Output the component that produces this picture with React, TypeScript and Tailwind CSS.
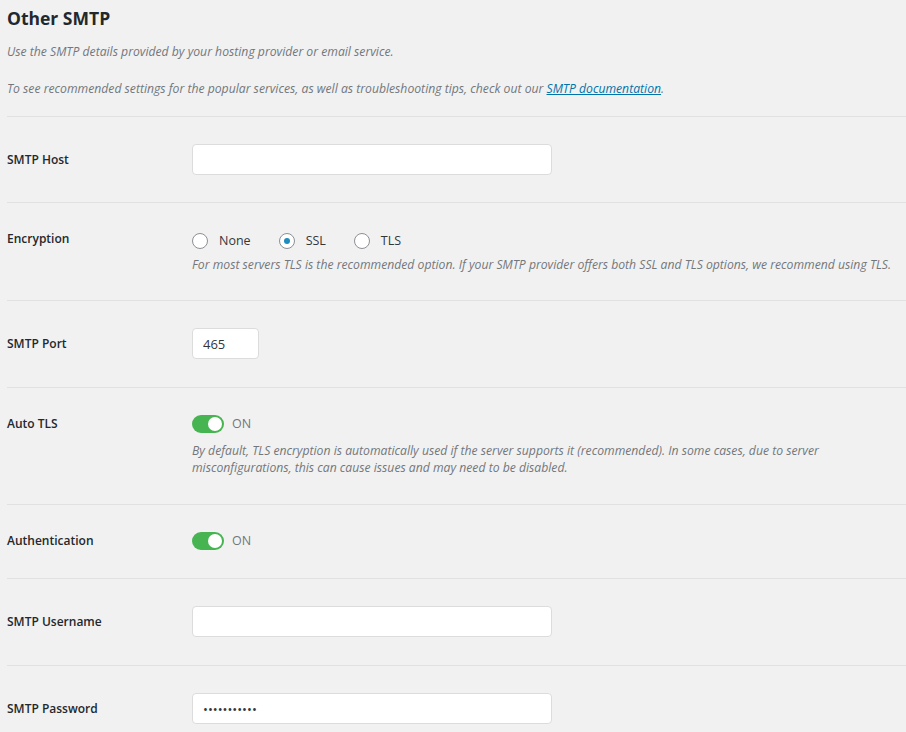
import type { ReactNode } from "react";

const font = { fontFamily: '"Open Sans", "Noto Sans", sans-serif' };

const Row = ({
  label,
  tall,
  loose,
  children,
}: {
  label: string;
  tall?: boolean;
  loose?: boolean;
  children: ReactNode;
}) => (
  <div className={`flex items-start border-b border-[#e1e1e1] pt-[27px] ${loose ? "pb-[28px]" : "pb-[27px]"}`}>
    <div
      className={`w-[185px] shrink-0 flex items-center text-[12px] font-semibold text-[#23282d] ${
        tall ? "h-[31px]" : "h-[18px]"
      }`}
    >
      {label}
    </div>
    <div className="flex-1 min-w-0">{children}</div>
  </div>
);

const TextInput = ({ w, value, password }: { w: string; value?: string; password?: boolean }) => (
  <input
    type={password ? "password" : "text"}
    defaultValue={value}
    readOnly
    className={`${w} h-[31px] block rounded-[4px] border border-[#dcdcdc] bg-white px-[10px] text-[13px] text-[#32373c] outline-none`}
  />
);

const Desc = ({ children, className = "" }: { children: ReactNode; className?: string }) => (
  <p className={`text-[12.2px] italic leading-[17px] text-[#72777c] ${className}`}>{children}</p>
);

const Radio = ({ label, checked }: { label: string; checked?: boolean }) => (
  <label className="flex items-center gap-[11px] text-[12.5px] text-[#32373c]">
    <span className="flex h-[16px] w-[16px] items-center justify-center rounded-full border border-[#8c8f94] bg-white">
      {checked && <span className="h-[6px] w-[6px] rounded-full bg-[#1e8cbe]" />}
    </span>
    {label}
  </label>
);

const Toggle = () => (
  <div className="flex h-[18px] items-center gap-[8px]">
    <span className="flex h-[18px] w-[32px] items-center justify-end rounded-full bg-[#46b450] pr-[2px]">
      <span className="h-[14px] w-[14px] rounded-full bg-white" />
    </span>
    <span className="text-[12.5px] text-[#72777c]">ON</span>
  </div>
);

export default function App() {
  return (
    <div className="min-h-screen bg-[#f1f1f1] pl-[7px]" style={font}>
      <div className="border-b border-[#e1e1e1] pt-[7px] pb-[19px]">
        <h2 className="text-[17.5px] font-bold leading-[22px] text-[#23282d]">Other SMTP</h2>
        <Desc className="mt-[14px]">Use the SMTP details provided by your hosting provider or email service.</Desc>
        <Desc className="mt-[20px]">
          To see recommended settings for the popular services, as well as troubleshooting tips, check out our{" "}
          <a href="#" className="text-[#0073aa] underline">
            SMTP documentation
          </a>
          .
        </Desc>
      </div>

      <Row label="SMTP Host" tall>
        <TextInput w="w-[360px]" />
      </Row>

      <Row label="Encryption">
        <div className="mt-[2px] flex h-[18px] items-center gap-[28px]">
          <Radio label="None" />
          <Radio label="SSL" checked />
          <Radio label="TLS" />
        </div>
        <Desc className="mt-[6px] whitespace-nowrap">
          For most servers TLS is the recommended option. If your SMTP provider offers both SSL and TLS options, we
          recommend using TLS.
        </Desc>
      </Row>

      <Row label="SMTP Port" tall loose>
        <TextInput w="w-[67px]" value="465" />
      </Row>

      <Row label="Auto TLS" loose>
        <Toggle />
        <Desc className="mt-[9px]">
          By default, TLS encryption is automatically used if the server supports it (recommended). In some cases, due to server
          <br />
          misconfigurations, this can cause issues and may need to be disabled.
        </Desc>
      </Row>

      <Row label="Authentication" loose>
        <Toggle />
      </Row>

      <Row label="SMTP Username" tall loose>
        <TextInput w="w-[360px]" />
      </Row>

      <Row label="SMTP Password" tall loose>
        <TextInput w="w-[360px]" value="xxxxxxxxxxx" password />
      </Row>
    </div>
  );
}
